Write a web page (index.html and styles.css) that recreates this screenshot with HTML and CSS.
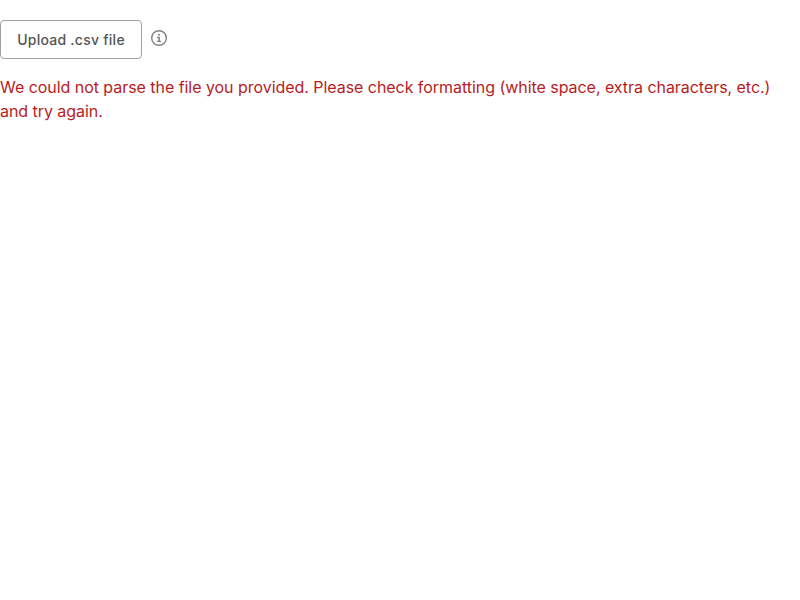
FILE: index.html
```html
<!DOCTYPE html>
<html lang="en">
<head>
<meta charset="utf-8">
<title>Upload</title>
<link rel="stylesheet" href="styles.css">
</head>
<body>
<div class="uploader">
  <button class="upload-button" type="button">Upload .csv file</button>
  <svg class="info-icon" viewBox="0 0 16 16" aria-hidden="true">
    <circle cx="8" cy="8" r="7.3" fill="none" stroke="currentColor" stroke-width="1.4"/>
    <circle cx="8" cy="4.8" r="1" fill="currentColor"/>
    <path d="M6.2 7.5H8.2V11.4M6 11.4H10" fill="none" stroke="currentColor" stroke-width="1.4"/>
  </svg>
</div>
<p class="error">We could not parse the file you provided. Please check formatting (white space, extra characters, etc.) and try again.</p>
</body>
</html>
```
FILE: styles.css
```css
body {
  margin: 0;
  background: #fff;
  font-family: Inter, sans-serif;
}

.uploader {
  display: flex;
  align-items: flex-start;
  gap: 9px;
  padding-top: 20px;
}

.upload-button {
  box-sizing: border-box;
  width: 142px;
  height: 39px;
  padding: 0;
  border: 1px solid #a0a0a0;
  border-radius: 4px;
  background: #fff;
  color: #555;
  font: 500 14px/20px Inter, sans-serif;
  letter-spacing: 0.25px;
  white-space: nowrap;
}

.info-icon {
  width: 16px;
  height: 16px;
  margin-top: 10px;
  color: #808080;
}

.error {
  margin: 16px 0 0;
  color: #b71c23;
  font-size: 16px;
  line-height: 24px;
  letter-spacing: -0.045px;
}
```
